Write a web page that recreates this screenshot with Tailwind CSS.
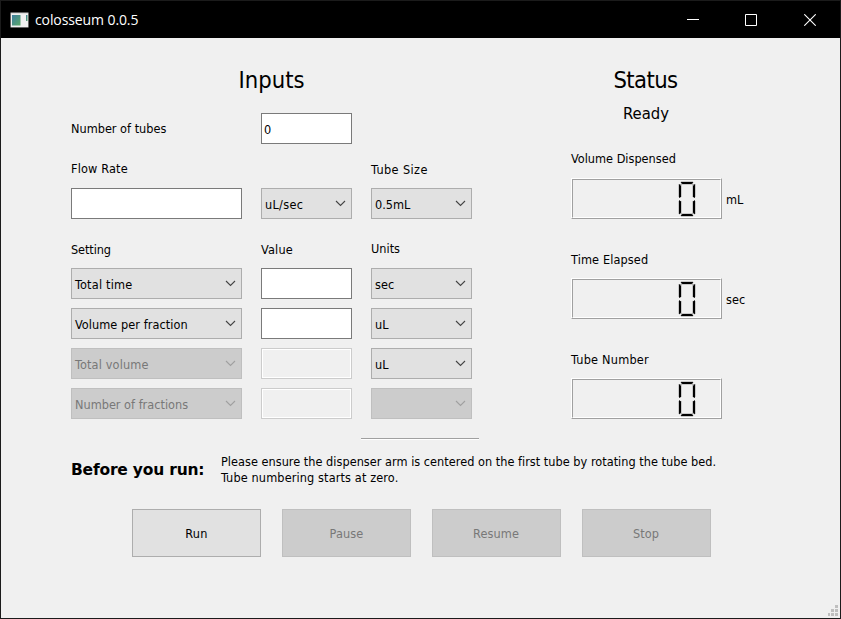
<!DOCTYPE html>
<html lang="en">
<head>
<meta charset="utf-8">
<title>colosseum 0.0.5</title>
<script src="https://cdn.jsdelivr.net/npm/@tailwindcss/browser@4"></script>
</head>
<body class="overflow-hidden">
<svg class="hidden">
  <symbol id="chev" viewBox="0 0 11 7"><path d="M1 1l4.500 4.500L10 1" fill="none" stroke="currentColor" stroke-width="1.100"/></symbol>
  <symbol id="zero" viewBox="0 0 18 36">
    <path d="M2 3v13M2 20v13M16 3v13M16 20v13M3 2h12M3 34h12" fill="none" stroke="#a0a0a0" stroke-width="3"/>
    <path d="M1 3l2 2v11l-2 1zM1 19l2 1.500v11l-2 2zM17 3l-2 2v11l2 1zM17 19l-2 1.500v11l2 2zM2.500 1h13l-2 2h-9zM2.500 35h13l-2-2h-9z" fill="#000"/>
  </symbol>
</svg>
<div class="w-[841px] h-[619px] flex flex-col border border-[#1b1b1b] bg-[#f0f0f0] text-black text-[12.6px] leading-4 font-['DejaVu_Sans_Condensed','DejaVu_Sans',sans-serif] [font-stretch:condensed] relative">
  <header class="h-[37px] shrink-0 bg-black text-white flex items-center pl-[9px]">
    <svg class="w-[19px] h-[16px]" viewBox="0 0 19 16"><defs><linearGradient id="g" x1="0" y1="0" x2="1" y2="1"><stop offset="0" stop-color="#3f7fa0"/><stop offset="1" stop-color="#5aa868"/></linearGradient></defs><rect x=".5" y=".5" width="18" height="15" fill="#c8c8c8"/><rect x="1" y="1.500" width="17" height="13.500" fill="#f1f1f1"/><rect x="2" y="3" width="8.500" height="10.500" fill="url(#g)"/><rect x="16" y="3" width="1.500" height="6" fill="url(#g)"/></svg>
    <span class="ml-[6px] mt-px text-[14px] leading-5 font-['Open_Sans',sans-serif] [font-stretch:normal] tracking-[-0.1px]">colosseum 0.0.5</span>
    <div class="ml-auto flex items-center pr-[24px]">
      <svg class="w-3 h-3 mr-[46px]" viewBox="0 0 12 12"><path d="M0 5.500h12" stroke="#fff"/></svg>
      <svg class="w-3 h-3 mr-[47px]" viewBox="0 0 12 12"><path d="M.5.5h11v11H.5z" fill="none" stroke="#fff"/></svg>
      <svg class="w-3 h-3" viewBox="0 0 12 12"><path d="M.3.3l11.400 11.400M11.700.3L.3 11.700" stroke="#fff" stroke-width="1.100"/></svg>
    </div>
  </header>

  <main class="pl-[70px]">
    <div class="flex h-[400px]">
      <section class="w-[401px]">
        <h1 class="text-center text-[23.600px] leading-[30px] pt-[27px] h-[75px]">Inputs</h1>
        <div class="grid grid-cols-[171px_91px_101px] gap-x-[19px] items-center">
          <span>Number of tubes</span>
          <div class="h-[31px] bg-white border border-[#7a7a7a] pl-[2px] pt-[8px]">0</div>
        </div>
        <div class="grid grid-cols-[171px_91px_101px] gap-x-[19px] mt-[16px]">
          <span class="h-[28px] pt-px tracking-[0.15px]">Flow Rate</span><span></span><span class="pt-[2px] tracking-[0.4px]">Tube Size</span>
          <div class="h-[31px] bg-white border border-[#7a7a7a]"></div>
          <div class="h-[31px] bg-[#e1e1e1] border border-[#adadad] flex items-center justify-between pl-[3px] pr-[5px]"><span class="pt-[2px] tracking-[0.3px]">uL/sec</span><svg class="w-[11px] h-[7px] text-[#444]"><use href="#chev"/></svg></div>
          <div class="h-[31px] bg-[#e1e1e1] border border-[#adadad] flex items-center justify-between pl-[3px] pr-[5px]"><span class="pt-[2px]">0.5mL</span><svg class="w-[11px] h-[7px] text-[#444]"><use href="#chev"/></svg></div>
        </div>
        <div class="grid grid-cols-[171px_91px_101px] gap-x-[19px] mt-[22px]">
          <span class="h-[27px] pt-px tracking-[-0.1px]">Setting</span><span class="pt-px tracking-[0.2px]">Value</span><span>Units</span>
        </div>
        <div class="grid grid-cols-[171px_91px_101px] gap-x-[19px] gap-y-[9px]">
          <div class="h-[31px] bg-[#e1e1e1] border border-[#adadad] flex items-center justify-between pl-[3px] pr-[5px]"><span class="pt-[2px] tracking-[0.2px]">Total time</span><svg class="w-[11px] h-[7px] text-[#444]"><use href="#chev"/></svg></div>
          <div class="bg-white border border-[#7a7a7a]"></div>
          <div class="h-[31px] bg-[#e1e1e1] border border-[#adadad] flex items-center justify-between pl-[3px] pr-[5px]"><span class="pt-[2px]">sec</span><svg class="w-[11px] h-[7px] text-[#444]"><use href="#chev"/></svg></div>

          <div class="h-[31px] bg-[#e1e1e1] border border-[#adadad] flex items-center justify-between pl-[3px] pr-[5px]"><span class="pt-[2px] tracking-[0.06px]">Volume per fraction</span><svg class="w-[11px] h-[7px] text-[#444]"><use href="#chev"/></svg></div>
          <div class="bg-white border border-[#7a7a7a]"></div>
          <div class="h-[31px] bg-[#e1e1e1] border border-[#adadad] flex items-center justify-between pl-[3px] pr-[5px]"><span class="pt-[2px]">uL</span><svg class="w-[11px] h-[7px] text-[#444]"><use href="#chev"/></svg></div>

          <div class="h-[31px] bg-[#cccccc] border border-[#bfbfbf] text-[#787878] flex items-center justify-between pl-[3px] pr-[5px]"><span class="pt-[2px] tracking-[0.15px]">Total volume</span><svg class="w-[11px] h-[7px] text-[#a0a0a0]"><use href="#chev"/></svg></div>
          <div class="border border-[#cccccc] p-px bg-white"><div class="h-full bg-[#f0f0f0]"></div></div>
          <div class="h-[31px] bg-[#e1e1e1] border border-[#adadad] flex items-center justify-between pl-[3px] pr-[5px]"><span class="pt-[2px]">uL</span><svg class="w-[11px] h-[7px] text-[#444]"><use href="#chev"/></svg></div>

          <div class="h-[31px] bg-[#cccccc] border border-[#bfbfbf] text-[#787878] flex items-center justify-between pl-[3px] pr-[5px]"><span class="pt-[2px]">Number of fractions</span><svg class="w-[11px] h-[7px] text-[#a0a0a0]"><use href="#chev"/></svg></div>
          <div class="border border-[#cccccc] p-px bg-white"><div class="h-full bg-[#f0f0f0]"></div></div>
          <div class="h-[31px] bg-[#cccccc] border border-[#bfbfbf] flex items-center justify-end pr-[5px]"><svg class="w-[11px] h-[7px] text-[#a0a0a0]"><use href="#chev"/></svg></div>
        </div>
      </section>

      <section class="ml-[99px] w-[200px]">
        <h1 class="w-[149px] text-center text-[23.600px] leading-[30px] pt-[27px] tracking-[-0.6px]">Status</h1>
        <p class="w-[150px] text-center text-[16.500px] leading-5 mt-[9px]">Ready</p>
        <div class="mt-[27px] h-[101px]">
          <p class="h-[27px]">Volume Dispensed</p>
          <div class="flex items-center gap-[4px]">
            <div class="w-[151px] h-[41px] border border-t-white border-l-white border-r-[#a0a0a0] border-b-[#a0a0a0]"><div class="h-full border border-t-[#a0a0a0] border-l-[#a0a0a0] border-r-white border-b-white flex justify-end pt-px pr-[24px]"><svg class="w-[18px] h-[36px]"><use href="#zero"/></svg></div></div>
            <span class="pt-[2px]">mL</span>
          </div>
        </div>
        <div class="h-[100px]">
          <p class="h-[26px] tracking-[0.12px]">Time Elapsed</p>
          <div class="flex items-center gap-[4px]">
            <div class="w-[151px] h-[41px] border border-t-white border-l-white border-r-[#a0a0a0] border-b-[#a0a0a0]"><div class="h-full border border-t-[#a0a0a0] border-l-[#a0a0a0] border-r-white border-b-white flex justify-end pt-px pr-[24px]"><svg class="w-[18px] h-[36px]"><use href="#zero"/></svg></div></div>
            <span class="pt-[2px]">sec</span>
          </div>
        </div>
        <div>
          <p class="h-[26px] tracking-[0.22px]">Tube Number</p>
          <div class="w-[151px] h-[41px] border border-t-white border-l-white border-r-[#a0a0a0] border-b-[#a0a0a0]"><div class="h-full border border-t-[#a0a0a0] border-l-[#a0a0a0] border-r-white border-b-white flex justify-end pt-px pr-[24px]"><svg class="w-[18px] h-[36px]"><use href="#zero"/></svg></div></div>
        </div>
      </section>
    </div>

    <div class="ml-[290px] w-[118px] h-[2px] border-t border-t-[#a0a0a0] border-b border-b-white"></div>
    <div class="flex items-center mt-[14px] h-[32px]">
      <b class="w-[150px] text-[15.500px] leading-5 whitespace-nowrap font-['DejaVu_Sans',sans-serif] [font-stretch:normal] tracking-[-0.2px] -mt-px">Before you run:</b>
      <p class="whitespace-nowrap tracking-[0.02px]">Please ensure the dispenser arm is centered on the first tube by rotating the tube bed.<br><span class="tracking-[0.12px]">Tube numbering starts at zero.</span></p>
    </div>
    <div class="flex gap-[21px] ml-[61px] mt-[23px]">
      <button class="w-[129px] h-[48px] pt-[2px] bg-[#e1e1e1] border border-[#adadad] tracking-[0.2px]">Run</button>
      <button disabled class="w-[129px] h-[48px] pt-[2px] bg-[#cccccc] border border-[#bfbfbf] text-[#787878] tracking-[0.1px]">Pause</button>
      <button disabled class="w-[129px] h-[48px] pt-[2px] pr-px bg-[#cccccc] border border-[#bfbfbf] text-[#787878] tracking-[0.1px]">Resume</button>
      <button disabled class="w-[129px] h-[48px] pt-[2px] pr-px bg-[#cccccc] border border-[#bfbfbf] text-[#787878]">Stop</button>
    </div>
  </main>
  <svg class="absolute right-[2px] bottom-[2px] w-[11px] h-[11px]" viewBox="0 0 11 11" fill="#bfbfbf"><path d="M8 0h3v3H8zM4 4h3v3H4zM8 4h3v3H8zM1 8h2v3H1zM4 8h3v3H4zM8 8h3v3H8z"/></svg>
</div>
</body>
</html>
